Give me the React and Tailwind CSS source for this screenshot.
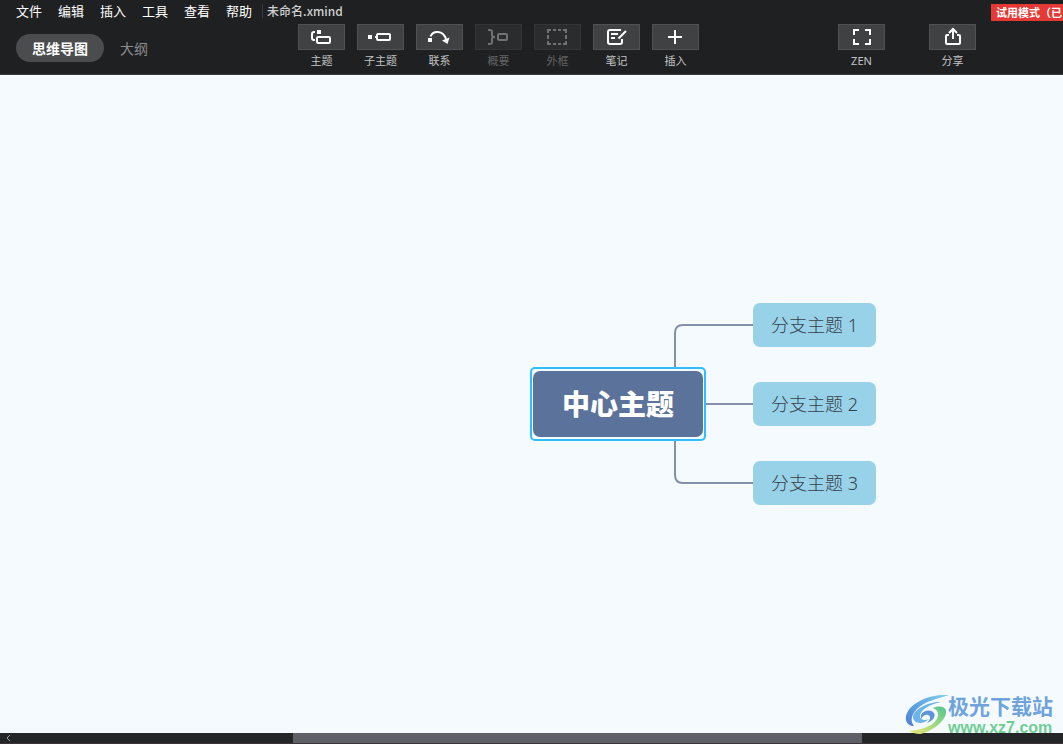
import React from "react";

const MENUS = ["文件", "编辑", "插入", "工具", "查看", "帮助"];

function Icon({ children }) {
  return (
    <svg className="overflow-visible" width="21" height="16" viewBox="0 0 21 16" fill="none" stroke="currentColor" strokeWidth="2" aria-hidden="true">
      {children}
    </svg>
  );
}

const TopicIcon = () => (
  <Icon>
    <path d="M4 3H3Q1 3 1 5V9Q1 11 3 11H4" />
    <rect x="6" y="1" width="4" height="4" fill="currentColor" stroke="none" />
    <rect x="6" y="8" width="13" height="6" rx="1" />
  </Icon>
);

const SubtopicIcon = () => (
  <Icon>
    <rect x="-2" y="6" width="4" height="4" fill="currentColor" stroke="none" />
    <path d="M5 8H7" />
    <rect x="7" y="5" width="13" height="6" rx="1" />
  </Icon>
);

const RelationIcon = () => (
  <Icon>
    <rect x="-1" y="9" width="4" height="4" fill="currentColor" stroke="none" />
    <path d="M1.500 7.500C4 1 14 1 17 10" />
    <path d="M13 11.500L20.500 8.500L18.500 15Z" fill="currentColor" stroke="none" />
  </Icon>
);

const SummaryIcon = () => (
  <Icon>
    <path d="M0 1H2Q4 1 4 3V6Q4 8 7 8Q4 8 4 10V13Q4 15 2 15H0" />
    <rect x="10" y="5" width="9" height="6" rx="1" />
  </Icon>
);

const BoundaryIcon = () => (
  <Icon>
    <path d="M1 4V1H4M6 1H9M11 1H14M16 1H19V4M19 6V10M19 12V15H16M14 15H11M9 15H6M4 15H1V12M1 10V6" />
  </Icon>
);

const NoteIcon = () => (
  <Icon>
    <path d="M15 1H4Q2 1 2 3V13Q2 15 4 15H14Q16 15 16 13V10" />
    <path d="M5 5H12M5 9H9" />
    <path d="M12.500 9.500L20 2" />
  </Icon>
);

const PlusIcon = () => (
  <Icon>
    <path d="M10 1V15M3 8H17" />
  </Icon>
);

const ZenIcon = () => (
  <Icon>
    <path d="M3 6V1H8M14 1H19V6M19 10V15H14M8 15H3V10" />
  </Icon>
);

const ShareIcon = () => (
  <Icon>
    <path d="M7 6H5Q4 6 4 7V14Q4 15 5 15H17Q18 15 18 14V7Q18 6 17 6H15" />
    <path d="M11 10V0M7 4L11 0L15 4" />
  </Icon>
);

const TOOLS = [
  { label: "主题", icon: TopicIcon },
  { label: "子主题", icon: SubtopicIcon },
  { label: "联系", icon: RelationIcon },
  { label: "概要", icon: SummaryIcon, disabled: true },
  { label: "外框", icon: BoundaryIcon, disabled: true },
  { label: "笔记", icon: NoteIcon },
  { label: "插入", icon: PlusIcon },
];

function Tool({ label, icon: Glyph, disabled }) {
  return (
    <button
      type="button"
      disabled={disabled}
      className="group flex w-[47px] shrink-0 flex-col items-center text-[#c3c4c5] disabled:text-[#626364]"
    >
      <span className="flex h-[26px] w-full items-center justify-center border border-[#505153] bg-[#404143] text-white group-disabled:border-[#343537] group-disabled:bg-[#2b2c2e] group-disabled:text-[#707172]">
        <Glyph />
      </span>
      <span className="mt-0.5 whitespace-nowrap text-[11px] leading-[18px]">{label}</span>
    </button>
  );
}

function Header() {
  return (
    <header className="flex shrink-0 flex-col overflow-hidden border-b border-[#3a3b40] bg-[#1f2022]">
      <div className="flex h-6 items-start">
        <nav className="flex gap-4 pl-4 text-[13px] leading-[22px] text-white">
          {MENUS.map((m) => (
            <button key={m} type="button" className="shrink-0">
              {m}
            </button>
          ))}
        </nav>
        <span className="ml-2.5 mt-1 h-3.5 w-px shrink-0 bg-[#3a3a3b]" />
        <span className="ml-1 whitespace-nowrap font-['Noto_Sans_CJK_SC'] text-[12px] font-medium leading-[22px] text-[#cfcfd0]">
          未命名.xmind
        </span>
        <div className="ml-auto mt-1 w-[72px] shrink-0 whitespace-nowrap bg-[#e53935] pl-[5px] text-[11px] font-bold leading-[17px] text-white">
          试用模式（已
        </div>
      </div>
      <div className="flex h-[50px] items-start">
        <div className="mt-2.5 flex w-[298px] shrink-0 items-center gap-4 pl-4">
          <button type="button" className="h-7 rounded-full bg-[#4b4c4e] px-4 text-[14px] font-bold text-white">
            思维导图
          </button>
          <button type="button" className="text-[14px] text-[#8a8b8c]">
            大纲
          </button>
        </div>
        <div className="flex gap-3">
          {TOOLS.map((t) => (
            <Tool key={t.label} {...t} />
          ))}
        </div>
        <div className="ml-auto flex gap-11 pr-[87px]">
          <Tool label="ZEN" icon={ZenIcon} />
          <Tool label="分享" icon={ShareIcon} />
        </div>
      </div>
    </header>
  );
}

const BRANCHES = [
  { label: "分支主题 1", pos: "top-[228px]" },
  { label: "分支主题 2", pos: "top-[307px]" },
  { label: "分支主题 3", pos: "top-[386px]" },
];

function Watermark() {
  return (
    <div className="absolute -bottom-1 right-2.5 z-10 flex items-start">
      <svg width="44" height="42" viewBox="0 0 44 42" aria-hidden="true">
        <defs>
          <linearGradient id="wmBlue" x1="0" y1="1" x2="1" y2="0">
            <stop offset="0" stopColor="#4f7fcf" />
            <stop offset="0.500" stopColor="#5fa6e2" />
            <stop offset="1" stopColor="#7fd0f2" />
          </linearGradient>
          <linearGradient id="wmGreen" x1="0" y1="1" x2="1" y2="0">
            <stop offset="0" stopColor="#f0e96f" />
            <stop offset="0.500" stopColor="#a4db7e" />
            <stop offset="1" stopColor="#4fc48f" />
          </linearGradient>
        </defs>
        <path d="M44 2C36 2 24 2 13 9C4 14 0 21 1 27C2 31 5 33 9 33C5 28 6 22 12 16C20 8 32 6 44 2Z" fill="url(#wmBlue)" />
        <path d="M36 9C26 8 10 15 8 23C7 30 17 33 24 26C20 28 15 27 15 23C15 17 25 11 36 9Z" fill="#6db4e8" />
        <path d="M16 22C18 17 26 16 29 20C31 23 28 28 22 30C26 26 26 23 23 22C20 21 18 23 16 26Z" fill="#5f94d8" />
        <path d="M28 15C36 18 34 27 26 32C19 36 11 37 4 38C8 40 11 41 15 41C27 39 40 28 41 20C42 14 35 12 28 15Z" fill="url(#wmGreen)" />
      </svg>
      <div className="-ml-px flex flex-col whitespace-nowrap">
        <span className="text-[21px] font-bold leading-[26px] text-[#6fa3dc]">极光下载站</span>
        <span className="font-['Liberation_Sans'] text-[16px] font-bold leading-[18px] text-[#6fce93]">www.xz7.com</span>
      </div>
    </div>
  );
}

function Canvas() {
  return (
    <main className="relative min-h-0 flex-1 bg-[#f5faff]">
      <svg className="absolute left-[674px] top-[248px]" width="80" height="162" viewBox="0 0 80 162" fill="none" stroke="#8490a7" strokeWidth="2" aria-hidden="true">
        <path d="M80 2H9Q1 2 1 10V152Q1 160 9 160H80M1 81H80" />
      </svg>
      <div className="absolute left-[530px] top-[292px] rounded-[5px] border-2 border-[#2ebdff] bg-[#f5faff] px-px py-0.5">
        <button
          type="button"
          className="block h-[66px] w-[170px] rounded-[7px] bg-[#5b729b] text-[28px] font-black text-white"
        >
          中心主题
        </button>
      </div>
      {BRANCHES.map((b) => (
        <button
          key={b.label}
          type="button"
          className={`absolute left-[753px] h-11 w-[123px] whitespace-nowrap rounded-[7px] bg-[#97d2e8] text-[18px] font-light text-[#38404a] ${b.pos}`}
        >
          {b.label}
        </button>
      ))}
      <Watermark />
    </main>
  );
}

function ScrollBar() {
  return (
    <div className="flex h-[11px] shrink-0 items-stretch border-b border-[#3a3338] bg-[#242527]">
      <button type="button" aria-label="←" className="flex w-4 shrink-0 items-center justify-center text-[#a0a0a0]">
        <svg width="5" height="8" viewBox="0 0 5 8" fill="none" stroke="currentColor" aria-hidden="true">
          <path d="M4 1L1 4L4 7" />
        </svg>
      </button>
      <div className="flex flex-1">
        <div className="w-[26.500%]" />
        <div className="w-[54.300%] bg-[#5d6066]" />
      </div>
    </div>
  );
}

export default function App() {
  return (
    <div className="flex h-screen flex-col overflow-hidden font-['Noto_Sans','Noto_Sans_CJK_SC',sans-serif]">
      <Header />
      <Canvas />
      <ScrollBar />
    </div>
  );
}
